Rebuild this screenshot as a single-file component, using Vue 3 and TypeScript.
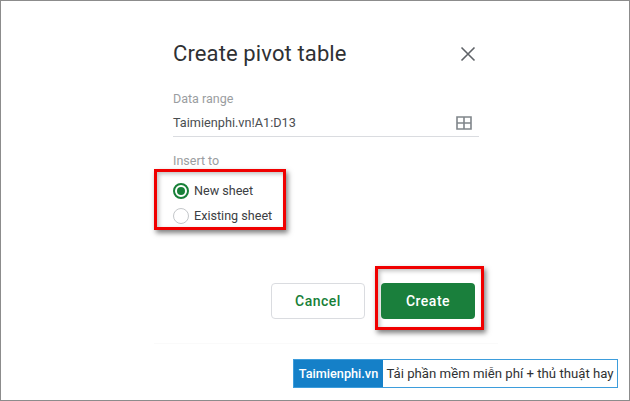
<script setup lang="ts">
const banner = { brand: 'Taimienphi.vn', slogan: 'Tải phần mềm miễn phí + thủ thuật hay' }
</script>

<template>
  <div class="page">
    <section class="dialog">
      <header class="head">
        <h1 class="title">Create pivot table</h1>
        <svg class="close" width="16" height="16" viewBox="0 0 16 16">
          <path d="M1.5 1.5 14.5 14.5M14.5 1.5 1.5 14.5" stroke="#5f6368" stroke-width="1.6" fill="none" />
        </svg>
      </header>
      <div class="label range-label">Data range</div>
      <div class="range">
        <span class="value">Taimienphi.vn!A1:D13</span>
        <svg class="grid" width="16" height="14" viewBox="0 0 16 14">
          <path d="M1 1h14v12H1zM8 1v12M1 7h14" stroke="#80868b" stroke-width="1.6" fill="none" />
        </svg>
      </div>
      <div class="label insert-label">Insert to</div>
      <div class="radio-box">
        <label class="radio-row">
          <span class="radio on"><span class="dot"></span></span>
          <span>New sheet</span>
        </label>
        <label class="radio-row">
          <span class="radio"></span>
          <span>Existing sheet</span>
        </label>
      </div>
      <div class="actions">
        <button class="btn cancel">Cancel</button>
        <div class="create-box">
          <button class="btn create">Create</button>
        </div>
      </div>
    </section>
    <div class="banner">
      <span class="brand">{{ banner.brand }}</span>
      <span class="slogan">{{ banner.slogan }}</span>
    </div>
  </div>
</template>

<style>
html, body { margin: 0; background: #fff; }
</style>

<style scoped>
.page {
  box-sizing: border-box;
  width: 630px;
  height: 401px;
  border: 1px solid #8c8c8c;
  background: #fff;
  font-family: Roboto, "Liberation Sans", sans-serif;
  overflow: hidden;
}
.dialog {
  box-sizing: border-box;
  width: 344px;
  height: 343px;
  margin-left: 153px;
  padding: 37px 0 0 19px;
  border-bottom: 1px solid #fafafa;
}
.head {
  display: flex;
  align-items: center;
  justify-content: space-between;
  width: 306px;
  height: 32px;
}
.title {
  margin: 0;
  font-size: 22px;
  font-weight: 400;
  line-height: 32px;
  letter-spacing: 0.12px;
  color: #2f3134;
}
.close { margin-right: 3px; }
.label {
  font-size: 12.5px;
  line-height: 16px;
  color: #9a9da0;
}
.range-label { margin-top: 21px; }
.range {
  display: flex;
  align-items: center;
  justify-content: space-between;
  box-sizing: border-box;
  width: 306px;
  height: 27px;
  margin-top: 3px;
  padding: 0 7px 1px 0;
  border-bottom: 1px solid #dadce0;
}
.value {
  font-size: 12.7px;
  color: #4a4d50;
}
.insert-label { margin-top: 16px; }
.radio-box {
  box-sizing: border-box;
  width: 132px;
  height: 61px;
  margin: 0 0 0 -19px;
  padding: 6px 0 0 16px;
  border: 3px solid #f00000;
  box-shadow: 2px 3px 5px rgba(0, 0, 0, 0.5), inset 2px 2px 4px rgba(0, 0, 0, 0.25);
}
.radio-row {
  display: flex;
  align-items: center;
  gap: 5px;
  height: 25px;
  font-size: 12.6px;
  color: #3c4043;
}
.radio {
  box-sizing: border-box;
  display: flex;
  align-items: center;
  justify-content: center;
  width: 16px;
  height: 16px;
  border: 1px solid #c4c7ca;
  border-radius: 50%;
}
.radio.on { border: 2px solid #188038; }
.dot {
  width: 8px;
  height: 8px;
  border-radius: 50%;
  background: #188038;
}
.actions {
  display: flex;
  align-items: flex-start;
  width: 330px;
  margin: 36px 0 0 98px;
}
.btn {
  box-sizing: border-box;
  width: 94px;
  height: 36px;
  border-radius: 4px;
  font-family: Roboto, "Liberation Sans", sans-serif;
  font-size: 14px;
  font-weight: 500;
  letter-spacing: 0.5px;
  padding: 0;
}
.cancel {
  margin-top: 17px;
  border: 1px solid #dadce0;
  background: #fff;
  color: #188038;
}
.create-box {
  box-sizing: border-box;
  width: 109px;
  height: 64px;
  margin-left: 10px;
  padding: 14px 0 0 3px;
  border: 3px solid #f00000;
  box-shadow: 2px 3px 5px rgba(0, 0, 0, 0.5), inset 2px 2px 4px rgba(0, 0, 0, 0.25);
}
.create {
  border: 0;
  background: #1a7f3c;
  color: #fff;
}
.banner {
  box-sizing: border-box;
  display: flex;
  width: 325px;
  height: 29px;
  margin: 15px 0 0 292px;
  border: 1px solid #3d9ddc;
  font-size: 13.2px;
  line-height: 27px;
}
.brand {
  width: 89px;
  text-align: center;
  background: #1580c8;
  color: #fff;
  font-size: 12.7px;
  font-weight: 500;
}
.slogan {
  flex: 1;
  text-align: center;
  color: #2f3133;
  white-space: nowrap;
}
</style>
